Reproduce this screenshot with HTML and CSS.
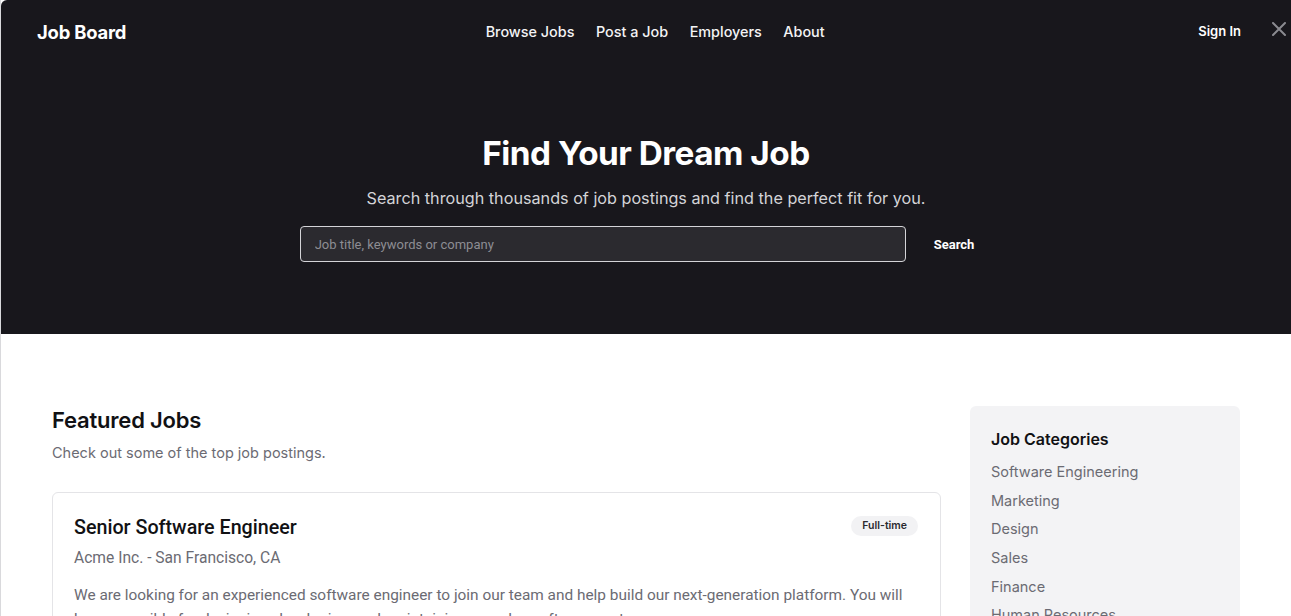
FILE: index.html
```html
<!DOCTYPE html>
<html lang="en">
<head>
<meta charset="utf-8">
<title>Job Board</title>
<link rel="stylesheet" href="styles.css">
</head>
<body>
<div class="page">
  <section class="top">
    <header class="header">
      <a class="logo" href="#">Job Board</a>
      <nav class="nav">
        <a href="#">Browse Jobs</a>
        <a href="#">Post a Job</a>
        <a href="#">Employers</a>
        <a href="#">About</a>
      </nav>
      <a class="signin" href="#">Sign In</a>
    </header>
    <button class="close" aria-label="Close">
      <svg width="14" height="14" viewBox="0 0 14 14"><path d="M1 1L13 13M13 1L1 13" stroke="#8a8a90" stroke-width="2" stroke-linecap="round"/></svg>
    </button>
    <div class="hero">
      <h1 class="hero-title">Find Your Dream Job</h1>
      <p class="hero-sub">Search through thousands of job postings and find the perfect fit for you.</p>
      <form class="search">
        <input class="search-input" type="text" placeholder="Job title, keywords or company">
        <button class="search-btn" type="button">Search</button>
      </form>
    </div>
  </section>
  <main class="content">
    <div class="main-col">
      <h2 class="section-title">Featured Jobs</h2>
      <p class="section-sub">Check out some of the top job postings.</p>
      <article class="card">
        <div class="card-head">
          <h3 class="card-title">Senior Software Engineer</h3>
          <span class="badge">Full-time</span>
        </div>
        <p class="card-meta">Acme Inc. - San Francisco, CA</p>
        <p class="card-desc">We are looking for an experienced software engineer to join our team and help build our next-generation platform. You will be responsible for designing, developing, and maintaining complex software systems.</p>
      </article>
    </div>
    <aside class="sidebar">
      <h3 class="side-title">Job Categories</h3>
      <ul class="cat-list">
        <li>Software Engineering</li>
        <li>Marketing</li>
        <li>Design</li>
        <li>Sales</li>
        <li>Finance</li>
        <li>Human Resources</li>
      </ul>
    </aside>
  </main>
</div>
</body>
</html>
```
FILE: styles.css
```css
* { box-sizing: border-box; }
html, body { margin: 0; padding: 0; }
body {
  font-family: Inter, "Noto Sans", sans-serif;
  background: #ffffff;
  color: #111114;
  overflow: hidden;
}
a { text-decoration: none; color: inherit; }
.page {
  border-left: 1px solid #d9d9dc;
  min-height: 616px;
}
.top {
  position: relative;
  background: #18171c;
  color: #fff;
  height: 334px;
  border-top-left-radius: 6px;
}
.header {
  display: flex;
  align-items: center;
  justify-content: space-between;
  height: 63px;
  padding: 0 50px 0 36px;
}
.logo { font-size: 18.4px; font-weight: 700; letter-spacing: -0.2px; }
.nav { display: flex; gap: 21.5px; font-size: 14.4px; font-weight: 500; color: #f4f4f5; margin-right: 14px; }
.signin { font-size: 13px; font-weight: 600; padding-bottom: 2px; }
.close {
  position: absolute;
  top: 22px;
  right: 5px;
  background: none;
  border: 0;
  padding: 0;
  width: 14px;
  height: 14px;
  cursor: pointer;
}
.close svg { display: block; }
.hero {
  display: flex;
  flex-direction: column;
  align-items: center;
  padding-top: 69px;
}
.hero-title {
  margin: 0;
  font-size: 33.3px;
  font-weight: 700;
  letter-spacing: -0.5px;
  line-height: 42px;
}
.hero-sub {
  margin: 12px 0 0;
  font-size: 16.2px;
  color: #d4d4d8;
  line-height: 24px;
}
.search {
  display: flex;
  align-items: center;
  margin-top: 16px;
  gap: 12px;
  margin-left: -2px;
}
.search-input {
  width: 606px;
  height: 36px;
  background: #2b2a2f;
  border: 1px solid #d4d4d8;
  border-radius: 4px;
  padding: 0 14px;
  font-family: Roboto, "Liberation Sans", sans-serif;
  font-size: 13px;
  color: #fff;
  outline: none;
}
.search-input::placeholder { color: #8d8d93; }
.search-btn {
  background: none;
  border: 0;
  color: #fff;
  font-family: Roboto, "Liberation Sans", sans-serif;
  font-weight: 700;
  font-size: 13px;
  padding: 8px 16px;
}
.content {
  display: flex;
  gap: 29px;
  padding: 72px 51px 0 51px;
}
.main-col { flex: 1; padding-top: 0; }
.section-title {
  margin: 0;
  font-size: 22px;
  font-weight: 600;
  line-height: 28px;
  letter-spacing: -0.2px;
}
.section-sub {
  margin: 8px 0 0;
  font-size: 14.5px;
  color: #6b6b73;
  line-height: 22px;
}
.card {
  margin-top: 28px;
  border: 1px solid #e4e4e7;
  border-radius: 6px;
  padding: 22px 22px 20px 21px;
  font-family: Roboto, "Liberation Sans", sans-serif;
}
.card-head {
  display: flex;
  justify-content: space-between;
  align-items: flex-start;
}
.card-title {
  margin: 0;
  font-size: 19.7px;
  font-weight: 500;
  line-height: 26px;
  color: #111114;
}
.badge {
  font-family: Inter, "Noto Sans", sans-serif;
  background: #f2f2f4;
  border-radius: 10px;
  font-size: 10.5px;
  font-weight: 600;
  padding: 3px 11px;
  color: #2a2a2e;
  margin-top: 1px;
  line-height: 14px;
}
.card-meta {
  margin: 6px 0 0;
  font-size: 15.6px;
  color: #6b6b73;
  line-height: 22px;
}
.card-desc {
  margin: 14px 0 0;
  font-size: 15.4px;
  color: #6b6b73;
  line-height: 24px;
}
.sidebar {
  width: 270px;
  flex-shrink: 0;
  align-self: flex-start;
  margin-top: 0;
  background: #f3f3f5;
  border-radius: 6px;
  padding: 22px 21px 20px;
}
.side-title {
  margin: 0;
  font-size: 16px;
  font-weight: 600;
  line-height: 22px;
}
.cat-list {
  list-style: none;
  margin: 12px 0 0;
  padding: 0;
}
.cat-list li {
  font-size: 14.5px;
  color: #6b6b73;
  line-height: 20px;
  margin-bottom: 8.7px;
}
```
